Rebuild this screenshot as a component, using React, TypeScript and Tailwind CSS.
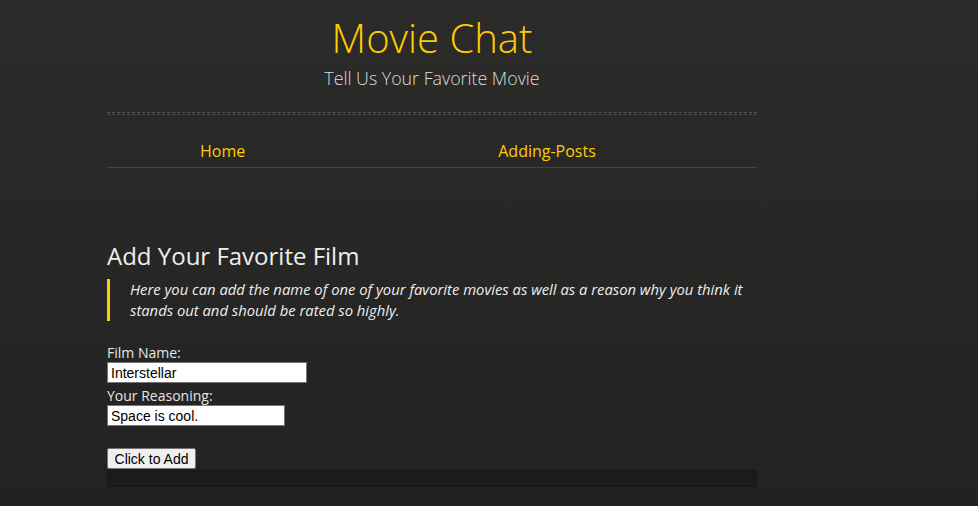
import React from "react";

export default function App() {
  return (
    <div
      className="w-[978px] h-[506px] overflow-hidden bg-gradient-to-b from-[#2b2b2a] to-[#222222]"
      style={{ fontFamily: '"Open Sans", sans-serif' }}
    >
      <div className="w-[650px] ml-[107px]">
        <header className="pt-[14px] text-center">
          <h1 className="text-[40px] leading-[48px] font-light text-[#ffcc00]">Movie Chat</h1>
          <p className="mt-[4px] text-[17.8px] leading-[24px] font-light text-[#dddddd]">
            Tell Us Your Favorite Movie
          </p>
        </header>
        <div className="mt-[22px] flex flex-col gap-[1px]">
          <div className="border-t border-dashed border-[#555555]" />
          <div className="border-t border-dashed border-[#4a4a4a]" />
        </div>
        <nav className="mt-[25px] h-[28px] border-b border-[#444444] flex items-start text-[16px] leading-[22px] text-[#ffcc00]">
          <a className="ml-[93px]">Home</a>
          <a className="ml-[253px]">Adding-Posts</a>
        </nav>
        <main className="mt-[72px]">
          <h2 className="text-[24px] leading-[32px] text-[#eeeeee]">Add Your Favorite Film</h2>
          <blockquote className="mt-[7px] border-l-[3px] border-[#ffcc00] pl-[20px] text-[14.8px] leading-[21px] italic text-[#eeeeee]">
            Here you can add the name of one of your favorite movies as well as a reason why you think it stands out and should be rated so highly.
          </blockquote>
          <form className="mt-[22px] flex flex-col items-start text-[14px] leading-[19px] text-[#e6e6e6]">
            <label>Film Name:</label>
            <input
              readOnly
              value="Interstellar"
              className="w-[200px] h-[21px] bg-white border border-[#767676] px-[3px] text-[14px] text-black outline-none"
              style={{ fontFamily: '"Liberation Sans", Arial, sans-serif' }}
            />
            <label className="mt-[3px]">Your Reasoning:</label>
            <input
              readOnly
              value="Space is cool."
              className="w-[178px] h-[21px] bg-white border border-[#767676] px-[3px] text-[14px] text-black outline-none"
              style={{ fontFamily: '"Liberation Sans", Arial, sans-serif' }}
            />
            <button
              type="button"
              className="mt-[22px] w-[89px] h-[21px] bg-[#efefef] border border-[#767676] rounded-[2px] text-[14px] text-black leading-none"
              style={{ fontFamily: '"Liberation Sans", Arial, sans-serif' }}
            >
              Click to Add
            </button>
          </form>
          <div className="mt-[1px] w-[650px] h-[17px] bg-[#1b1b1b] border border-[#151515] rounded-[2px]" />
        </main>
      </div>
    </div>
  );
}
